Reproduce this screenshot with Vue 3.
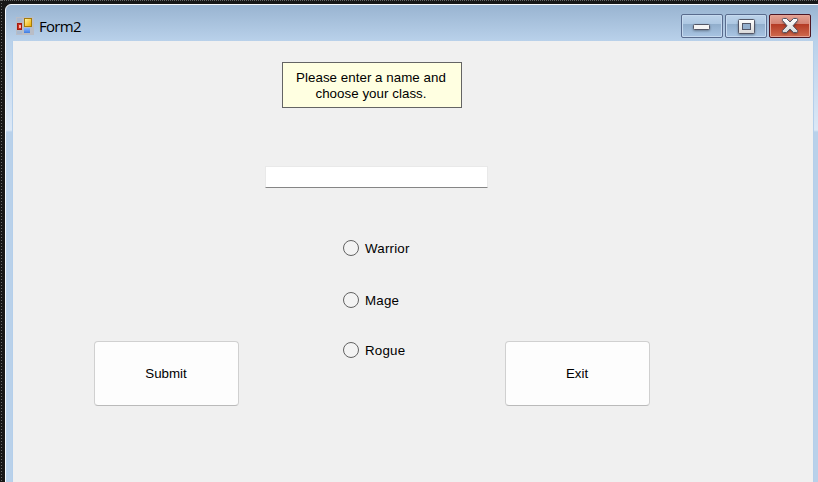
<script setup>
import { ref } from 'vue'

const name = ref('')
const choice = ref('')
const classes = ['Warrior', 'Mage', 'Rogue']
</script>

<template>
  <div class="desktop">
    <div class="window">
      <header class="titlebar">
        <svg class="app-icon" width="18" height="18" viewBox="0 0 18 18" shape-rendering="crispEdges">
          <defs>
            <linearGradient id="gold" x1="0" y1="0" x2="1" y2="1">
              <stop offset="0" stop-color="#fff0a0" /><stop offset="1" stop-color="#f0b000" />
            </linearGradient>
            <linearGradient id="blue" x1="0" y1="0" x2="0" y2="1">
              <stop offset="0" stop-color="#8ab8ff" /><stop offset="1" stop-color="#3f7ce0" />
            </linearGradient>
          </defs>
          <rect width="18" height="18" fill="#b9bdc6" />
          <path d="M1 1h5v4H1zM1 14h5v3H1z" fill="#a9b9cf" />
          <rect x="1" y="6" width="5" height="7" fill="#a51b10" />
          <rect x="2" y="7" width="3" height="5" fill="#c93022" />
          <rect x="3" y="8" width="2" height="3" fill="#ffb0a4" />
          <rect x="8" y="1" width="8" height="9" fill="#a67b08" />
          <rect x="9" y="2" width="6" height="7" fill="url(#gold)" />
          <rect x="8" y="11" width="6" height="5" fill="url(#blue)" />
        </svg>
        <h1 class="title">Form2</h1>
        <div class="controls">
          <button class="control" aria-label="Minimize">
            <svg width="18" height="8" viewBox="0 0 18 8">
              <rect x=".5" y="1.5" width="16" height="5" rx="1" fill="#f4f4f4" stroke="#535666" />
            </svg>
          </button>
          <button class="control" aria-label="Maximize">
            <svg class="maximize" width="17" height="15" viewBox="0 0 17 15">
              <defs>
                <linearGradient id="metal" x1="0" y1="0" x2="0" y2="1">
                  <stop offset="0" stop-color="#fff" /><stop offset="1" stop-color="#d8d8d8" />
                </linearGradient>
              </defs>
              <rect x=".5" y=".5" width="16" height="14" rx="1" fill="url(#metal)" stroke="#535666" />
              <rect x="4.5" y="4.5" width="8" height="6" fill="#93afcd" stroke="#535666" />
            </svg>
          </button>
          <button class="control close" aria-label="Close">
            <svg width="18" height="16" viewBox="0 0 18 16">
              <path d="M1.5 1.5Q1.5 .5 2.5 .5H5.5L9 4 12.5 .5h3q1 0 1 1v1L12 7.8l4.5 4.7v1q0 1-1 1h-3L9 11l-3.5 3.5h-3q-1 0-1-1v-1L6 7.8 1.5 2.5z" fill="url(#metal)" stroke="#535666" />
            </svg>
          </button>
        </div>
      </header>
      <main class="client">
        <p class="prompt">Please enter a name and<br />choose your class.</p>
        <input v-model="name" class="name" type="text" aria-label="Name" />
        <div class="choices">
          <button class="action">Submit</button>
          <div class="radios">
            <label v-for="item in classes" :key="item" class="option">
              <input v-model="choice" type="radio" name="class" :value="item" />
              <span class="option-text">{{ item }}</span>
            </label>
          </div>
          <button class="action">Exit</button>
        </div>
      </main>
    </div>
  </div>
</template>

<style>
body {
  overflow: hidden;
}
</style>

<style scoped>
* {
  box-sizing: border-box;
}
.desktop {
  width: 818px;
  height: 482px;
  padding: 4px 0 0 5px;
  overflow: hidden;
  background:
    repeating-linear-gradient(90deg, #686868 0 1px, transparent 1px 2px) 0 0 / 100% 1px no-repeat,
    repeating-linear-gradient(180deg, #686868 0 1px, transparent 1px 3px) 1px 0 / 1px 100% no-repeat,
    #171717;
}
.window {
  width: 820px;
  height: 490px;
  padding: 0 7px;
  border: 1px solid #f7fbff;
  border-radius: 6px 6px 0 0;
  background:
    linear-gradient(#99b4d1, #b9d1ea 36px, #dce8f6 125px, #b9d1ea 127px);
}
.titlebar {
  display: flex;
  height: 36px;
  padding-left: 3px;
}
.app-icon {
  margin-top: 12px;
}
.title {
  margin: 11px 0 0 5px;
  font: 400 15px/20px "Open Sans", "Noto Sans", sans-serif;
  letter-spacing: -0.7px;
  color: #000;
}
.controls {
  display: flex;
  gap: 2px;
  margin: 9px 0 0 auto;
  padding-right: 6px;
}
.control {
  display: flex;
  align-items: center;
  justify-content: center;
  width: 42px;
  height: 24px;
  padding: 0;
  border: 1px solid #596b8d;
  border-radius: 2px;
  box-shadow: inset 0 0 0 1px #c6daef;
  background: linear-gradient(#bdd3ea, #adc7e2 42%, #91aecc 43%, #a9c5e3);
}
.control svg {
  filter: drop-shadow(0 1px 1px #0005);
}
.control:first-child svg {
  margin-top: 1px;
}
.close {
  border-color: #4e1724;
  box-shadow: inset 0 0 0 1px #e5a495;
  background: linear-gradient(#e5a394, #d38172 42%, #b53b25 43%, #cf6b4f);
}
.client {
  width: 800px;
  height: 441px;
  padding-top: 21px;
  background: #f0f0f0;
  box-shadow: -1px 0 #b4cfeb, 1px 0 #b4cfeb;
  font: 13.33px/16px "Liberation Sans", Arial, sans-serif;
  color: #000;
}
.prompt {
  width: 180px;
  height: 46px;
  margin: 0 0 0 269px;
  padding: 7px 2px 0 0;
  border: 1px solid #646464;
  background: #ffffe1;
  text-align: center;
  letter-spacing: 0.04px;
}
.name {
  display: block;
  width: 223px;
  height: 22px;
  margin: 58px 0 0 252px;
  padding: 2px 4px;
  border: 1px solid #e9e9e9;
  border-bottom-color: #858585;
  border-radius: 1px;
  outline: 0;
  background: #fff;
  font: inherit;
}
.choices {
  display: grid;
  grid-template-columns: 145px 266px 145px;
  align-items: end;
  height: 168px;
  margin: 50px 0 0 81px;
}
.radios {
  align-self: start;
  display: grid;
  grid-template-rows: 52px 50px 20px;
  padding-left: 104px;
}
.option {
  display: flex;
  align-items: center;
  gap: 6px;
  height: 20px;
}
.option-text {
  padding-top: 2px;
  letter-spacing: 0.2px;
}
.option input {
  appearance: none;
  width: 16px;
  height: 16px;
  margin: 0;
  border: 1px solid #626262;
  border-radius: 50%;
  background: #f3f3f3;
}
.option input:checked {
  border: 5px solid #0067c0;
}
.action {
  height: 65px;
  padding: 0 1px 0 0;
  border: 1px solid #d0d0d0;
  border-bottom-color: #bababa;
  border-radius: 4px;
  background: #fdfdfd;
  color: #000;
  font: inherit;
}
</style>
